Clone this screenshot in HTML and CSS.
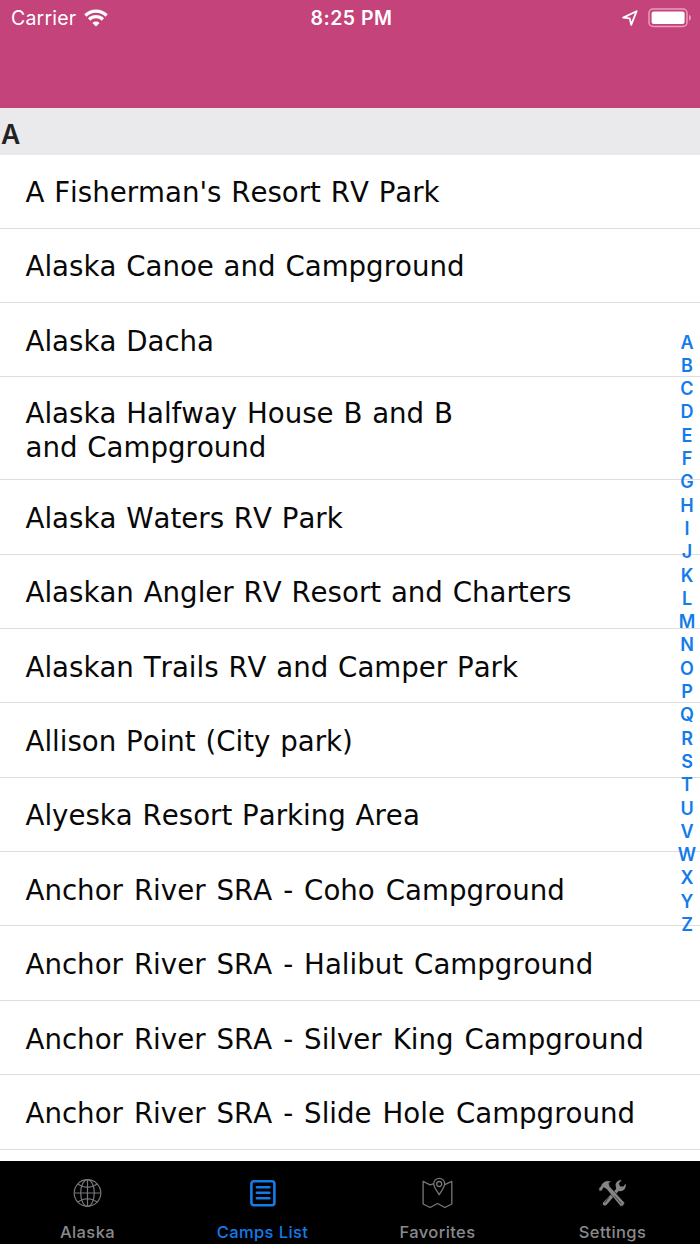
FILE: index.html
```html
<!DOCTYPE html>
<html lang="en">
<head>
  <meta charset="UTF-8">
  <meta name="viewport" content="width=device-width, initial-scale=1.0">
  <title>Camps List</title>
  <link rel="stylesheet" href="styles.css">
</head>
<body>
  <div class="app">
    <header class="navbar">
      <div class="status">
        <div class="carrier">
          <span>Carrier</span>
          <svg class="wifi" viewBox="0 0 24 18" width="24" height="18">
            <g fill="none" stroke="#fff" stroke-width="3.2">
              <path d="M1.4 6.5a15 15 0 0 1 21.2 0"/>
              <path d="M5.1 10.5a9.8 9.8 0 0 1 13.8 0"/>
            </g>
            <path fill="#fff" d="M12 17.5L8.4 13.9a5.1 5.1 0 0 1 7.2 0z"/>
          </svg>
        </div>
        <div class="time">8:25 PM</div>
        <div class="battery-group">
          <svg viewBox="0 0 16 16" width="16" height="16">
            <path d="M14.6 1.2L1.2 7.6L7.7 8.4L9.2 14.8Z" fill="none" stroke="#fff" stroke-width="1.8" stroke-linejoin="round"/>
          </svg>
          <svg viewBox="0 0 44 20" width="44" height="20">
            <rect x="1" y="1" width="38" height="17.4" rx="4" fill="none" stroke="#eb9dbd" stroke-width="1.5"/>
            <rect x="3.6" y="3.6" width="33" height="12.4" rx="2" fill="#fff"/>
            <path d="M41 6.7q2 1 2 3t-2 3z" fill="#eb9dbd"/>
          </svg>
        </div>
      </div>
    </header>

    <main class="content">
      <h2 class="section-title">A</h2>
      <ul class="camps">
        <li class="camp first"><span>A Fisherman's Resort RV Park</span></li>
        <li class="camp"><span>Alaska Canoe and Campground</span></li>
        <li class="camp"><span>Alaska Dacha</span></li>
        <li class="camp tall"><span>Alaska Halfway House B and B<br>and Campground</span></li>
        <li class="camp"><span>Alaska Waters RV Park</span></li>
        <li class="camp"><span>Alaskan Angler RV Resort and Charters</span></li>
        <li class="camp"><span>Alaskan Trails RV and Camper Park</span></li>
        <li class="camp"><span>Allison Point (City park)</span></li>
        <li class="camp"><span>Alyeska Resort Parking Area</span></li>
        <li class="camp sra"><span>Anchor River SRA - Coho Campground</span></li>
        <li class="camp sra"><span>Anchor River SRA - Halibut Campground</span></li>
        <li class="camp sra"><span>Anchor River SRA - Silver King Campground</span></li>
        <li class="camp sra"><span>Anchor River SRA - Slide Hole Campground</span></li>
      </ul>
      <nav class="index">
        <span>A</span><span>B</span><span>C</span><span>D</span><span>E</span><span>F</span><span>G</span>
        <span>H</span><span>I</span><span>J</span><span>K</span><span>L</span><span>M</span><span>N</span>
        <span>O</span><span>P</span><span>Q</span><span>R</span><span>S</span><span>T</span><span>U</span>
        <span>V</span><span>W</span><span>X</span><span>Y</span><span>Z</span>
      </nav>
    </main>

    <footer class="tabbar">
      <div class="tab">
        <svg viewBox="0 0 32 32" width="32" height="32" fill="none" stroke="#77777a" stroke-width="1.2">
          <circle cx="15.5" cy="16" r="13.3"/>
          <ellipse cx="15.5" cy="16" rx="6.8" ry="13.3"/>
          <path d="M15.5 2.7v26.6M2.2 16h26.6M5.7 7q9.8 6.8 19.6 0M5.7 25q9.8-6.8 19.6 0"/>
        </svg>
        <span>Alaska</span>
      </div>
      <div class="tab active">
        <svg viewBox="0 0 32 32" width="32" height="32" fill="none" stroke="#147bea" stroke-width="2.6" stroke-linecap="round">
          <rect x="4.4" y="4.2" width="23" height="24" rx="2.5"/>
          <path d="M9.8 10.2h12.6M9.8 15.8h12.6M9.8 21.3h12.6" stroke-width="2.4"/>
        </svg>
        <span>Camps List</span>
      </div>
      <div class="tab">
        <svg viewBox="0 0 32 32" width="32" height="32" fill="none" stroke="#77777a" stroke-width="1.3" stroke-linejoin="round">
          <path d="M12 6.6L8.1 7.8L1.1 4.4V27L8.1 30.5L15.5 26.5L22.9 30.5L29.8 27V4.4L22.8 7.7"/>
          <path d="M17.2 17.8C15.1 14 11.7 10.4 11.7 6.8a5.5 5.5 0 0 1 11 0c0 3.6-3.4 7.2-5.5 11z"/>
          <circle cx="17.2" cy="7" r="2.5"/>
        </svg>
        <span>Favorites</span>
      </div>
      <div class="tab">
        <svg viewBox="0 0 32 32" width="32" height="32">
          <g fill="#858585">
            <path d="M5.9 25.7L19.2 12.1L18.5 7.3Q20 3.2 24.7 3.1L21.8 6.6L23.2 9.5L26.4 9.4L28.7 6.5Q29.5 11.3 26 13.4Q24.1 14.5 21.7 14L9.2 28.2Q5.2 29.2 5.9 25.7Z"/>
            <path stroke="#000" stroke-width=".5" d="M2.1 13.2Q1.1 10.9 3.5 9.7Q5.6 4.1 10.5 3.7L14.5 4.3L11.9 6.2L12.8 9.6L27.6 25.7Q27.1 29.4 23.5 29.3L9.5 12.1L6.5 10.5L5.2 13.4L2.8 14.2Z"/>
          </g>
          <path d="M17.4 18.7L24.5 27M12 20.3L7.8 25.8" fill="none" stroke="#292929" stroke-width=".8"/>
        </svg>
        <span>Settings</span>
      </div>
    </footer>
  </div>
</body>
</html>
```

FILE: styles.css
```css
* {
  box-sizing: border-box;
}
body {
  margin: 0;
  font-family: Inter, "Liberation Sans", sans-serif;
  background: white;
}
.app {
  display: flex;
  flex-direction: column;
  height: 1244px;
  overflow: hidden;
}
.navbar {
  height: 108px;
  background: #c3437a;
  color: white;
}
.status {
  display: grid;
  grid-template-columns: 1fr auto 1fr;
  align-items: center;
  height: 36px;
  padding: 0 8px 0 11px;
}
.carrier {
  display: flex;
  align-items: center;
  gap: 8px;
  font-size: 19.5px;
  letter-spacing: 0.2px;
}
.time {
  font-size: 19.5px;
  font-weight: 600;
  letter-spacing: 0.5px;
}
.battery-group {
  display: flex;
  justify-content: flex-end;
  align-items: center;
  gap: 10px;
}
.battery-group svg {
  display: block;
}
.content {
  position: relative;
  height: 1053px;
}
.section-title {
  height: 47px;
  margin: 0;
  padding-left: 1px;
  font-size: 26.5px;
  font-weight: 600;
  line-height: 52px;
  color: #222;
  background: #eaeaec;
}
.camps {
  margin: 0;
  padding: 0;
  list-style: none;
}
.camp {
  display: flex;
  align-items: center;
  height: 74.36px;
  padding: 4px 0 0 25.5px;
  border-bottom: 1px solid #dededf;
  font-family: "DejaVu Sans", sans-serif;
  font-size: 27.65px;
  font-kerning: none;
  line-height: 34px;
  word-spacing: 1px;
  color: #080808;
}
.camp.first {
  height: 73.6px;
}
.camp.tall {
  height: 103px;
  padding-top: 5px;
}
.camp.sra {
  word-spacing: 2.2px;
}
/* floats over the list on the right edge */
.index {
  position: absolute;
  top: 222.6px;
  right: 0;
  width: 26px;
  display: flex;
  flex-direction: column;
  font-size: 18px;
  font-weight: 600;
  line-height: 23.3px;
  text-align: center;
  color: #147bea;
}
.tabbar {
  display: grid;
  grid-template-columns: repeat(4, 1fr);
  height: 83px;
  background: black;
}
.tab {
  display: flex;
  flex-direction: column;
  align-items: center;
  padding-top: 16px;
  font-size: 16.5px;
  font-weight: 500;
  letter-spacing: 0.4px;
  color: #8a8a8c;
}
.tab span {
  margin-top: 13px;
  line-height: 20px;
}
.tab.active {
  color: #147bea;
}
```
